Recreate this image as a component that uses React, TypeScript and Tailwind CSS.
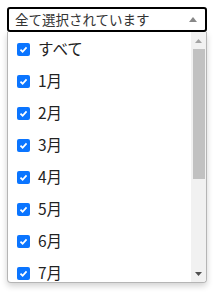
const items = ["すべて", "1月", "2月", "3月", "4月", "5月", "6月", "7月"];

function Check() {
  return (
    <span className="flex h-[13px] w-[13px] items-center justify-center rounded-[2px] bg-[#0b75ff]">
      <svg width="9" height="9" viewBox="0 0 10 10">
        <path d="M1.6 5.2 L4 7.5 L8.4 2.6" fill="none" stroke="white" strokeWidth="2" />
      </svg>
    </span>
  );
}

export default function App() {
  return (
    <div
      className="w-[224px] h-[298px] bg-white pl-[7px] pt-[7px]"
      style={{ fontFamily: '"Noto Sans CJK JP", "Noto Sans", sans-serif' }}
    >
      <div className="w-[200px]">
        {/* select box */}
        <div className="flex h-[25px] items-center justify-between rounded-[3px] border-2 border-black pl-[6px] pr-[6px]">
          <span className="text-[13.5px] leading-none text-[#333]">全て選択されています</span>
          <svg width="8" height="5" viewBox="0 0 8 5" className="mr-[2px]">
            <path d="M0 5 L4 0 L8 5 Z" fill="#888" />
          </svg>
        </div>

        {/* dropdown */}
        <div className="flex h-[251px] overflow-hidden rounded-b-[4px] border border-t-0 border-[#b5b5b5] bg-white shadow-[0_3px_6px_rgba(0,0,0,0.18)]">
          <div className="flex-1 overflow-hidden pt-[1px]">
            {items.map((label) => (
              <div key={label} className="flex h-[32px] items-center pl-[9px]">
                <Check />
                <span className="ml-[8px] text-[15.5px] leading-none text-[#222]">{label}</span>
              </div>
            ))}
          </div>

          {/* scrollbar */}
          <div className="flex w-[15px] flex-col items-center bg-[#f1f1f1]">
            <div className="flex h-[17px] items-center justify-center">
              <svg width="7" height="4" viewBox="0 0 7 4">
                <path d="M0 4 L3.5 0 L7 4 Z" fill="#a3a3a3" />
              </svg>
            </div>
            <div className="h-[130px] w-[12px] bg-[#c1c1c1]" />
            <div className="flex-1" />
            <div className="flex h-[17px] items-center justify-center">
              <svg width="7" height="4" viewBox="0 0 7 4">
                <path d="M0 0 L7 0 L3.5 4 Z" fill="#505050" />
              </svg>
            </div>
          </div>
        </div>
      </div>
    </div>
  );
}
